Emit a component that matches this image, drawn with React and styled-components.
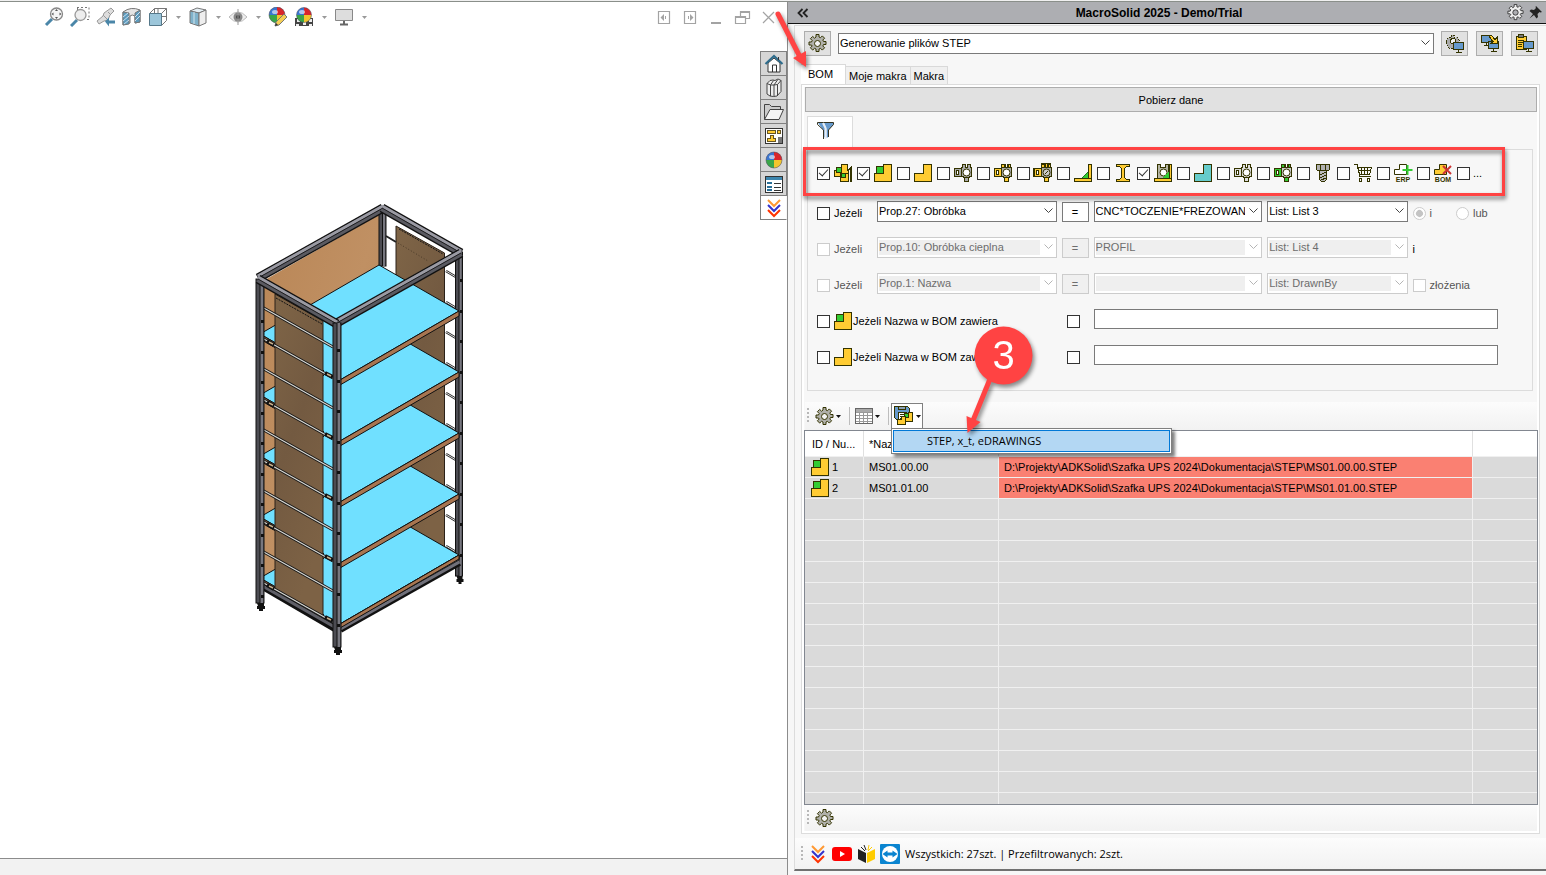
import styled, { createGlobalStyle, css } from "styled-components";

const INK = "#333300";
const YELLOW = "#ffcc33";
const GREEN = "#33cc33";
const BLUE = "#6699cc";
const RED = "#ff4343";

export default function App() {
  return (
    <>
      <GlobalStyle />
      <Layout>
        <ModelPane />
        <MacroPanel />
      </Layout>
    </>
  );
}

/* ---------- left: model view ---------- */

const viewTools = [
  { name: "Zoom to fit", icon: <ZoomFit /> },
  { name: "Zoom to area", icon: <ZoomArea /> },
  { name: "Previous view", icon: <PreviousView /> },
  { name: "Section view", icon: <SectionView /> },
  { name: "View orientation", icon: <Orientation />, menu: true },
  { name: "Display style", icon: <DisplayStyle />, menu: true },
  { name: "Hide/show items", icon: <Eye />, menu: true },
  { name: "Edit appearance", icon: <Appearance /> },
  { name: "Apply scene", icon: <Scene />, menu: true },
  { name: "View settings", icon: <Monitor />, menu: true },
];

const windowTools = [
  { name: "Previous pane", d: "M4.5 4.5h11v12h-11z", arrow: "M10 7v7l-3.500-3.500zM11 9h1v3h-1z" },
  { name: "Next pane", d: "M4.5 4.5h11v12h-11z", arrow: "M10 7v7l3.500-3.500zM8 9h1v3h-1z" },
  { name: "Minimize", d: "M5 15.5h10M5 16.5h10" },
  { name: "Restore", d: "M8.5 9v-4.5h9v7h-4M8 5.5h10M3.500 9.500h10v7h-10zM3 10.500h11" },
  { name: "Close", d: "M5 5l11 11M16 5l-11 11" },
];

const taskTabs = [
  { name: "Home", icon: <House /> },
  { name: "Design library", icon: <Books /> },
  { name: "File explorer", icon: <Folder /> },
  { name: "View palette", icon: <Palette /> },
  { name: "Appearances", icon: <Ball /> },
  { name: "Custom properties", icon: <PropertyList /> },
  { name: "MacroSolid", icon: <Chevrons />, active: true },
];

function ModelPane() {
  return (
    <Viewport>
      <ViewHeader>
        <ToolGroup>
          {viewTools.map((t) => (
            <ToolGroup key={t.name}>
              <FlatButton aria-label={t.name}>{t.icon}</FlatButton>
              {t.menu && (
                <MenuArrow aria-label={`${t.name} menu`}>
                  <svg width="5" height="3"><path d="M0 0h5l-2.500 3z" fill="#999" /></svg>
                </MenuArrow>
              )}
            </ToolGroup>
          ))}
        </ToolGroup>
        <ToolGroup>
          {windowTools.map((t) => (
            <FlatButton key={t.name} aria-label={t.name}>
              <svg width="21" height="21" viewBox="0 0 21 21">
                <path d={t.d} fill="none" stroke="#a3a3a3" strokeWidth="1.2" />
                {t.arrow && <path d={t.arrow} fill="#a3a3a3" />}
              </svg>
            </FlatButton>
          ))}
        </ToolGroup>
      </ViewHeader>
      <ViewBody>
        <Canvas>
          <Shelving />
        </Canvas>
        <TaskTabs>
          {taskTabs.map((t) => (
            <TaskTab key={t.name} aria-label={t.name} $active={t.active}>
              {t.icon}
            </TaskTab>
          ))}
        </TaskTabs>
      </ViewBody>
      <ViewFooter />
    </Viewport>
  );
}

const shelfTops = [311, 372, 433, 494, 555];
const rungs = [0, 1, 2, 3, 4, 5, 6, 7, 8, 9].map((n) => Math.round(n * 30.5));

function Beam({ x1, y1, x2, y2 }) {
  const p = { x1, y1, x2, y2 };
  return (
    <g>
      <line {...p} stroke="#111" strokeWidth="9" />
      <line {...p} stroke="#5a5a61" strokeWidth="6.500" />
      <line x1={x1} y1={y1 - 2} x2={x2} y2={y2 - 2} stroke="#9a9aa3" strokeWidth="3" />
      <line {...p} stroke="#1c1c1e" strokeWidth="1" />
    </g>
  );
}

function Post({ x, top, bottom, width, foot = true }) {
  return (
    <g>
      <rect x={x} y={top} width={width} height={bottom - top} fill="#4c4c52" stroke="#111" />
      <rect x={x + width / 2} y={top} width={width / 2 - 1} height={bottom - top} fill="#77777f" />
      <line x1={x + width / 2} x2={x + width / 2} y1={top} y2={bottom} stroke="#111" />
      {foot && <path d={`M${x + 1} ${bottom}h${width - 1}v3h1v3h-2v2h-${width - 4}v-2h-2v-3h1z`} fill="#111" />}
    </g>
  );
}

function Shelving() {
  return (
    <svg width="210" height="452" viewBox="256 204 210 452" role="img" aria-label="Shelving unit">
      <defs>
        <linearGradient id="lightWood" x1="0" y1="0" x2="1" y2="1">
          <stop offset="0" stopColor="#b98656" />
          <stop offset="0.5" stopColor="#c09063" />
          <stop offset="1" stopColor="#b48253" />
        </linearGradient>
        <linearGradient id="darkWood" x1="0" y1="0" x2="0.4" y2="1">
          <stop offset="0" stopColor="#7f6547" />
          <stop offset="0.5" stopColor="#735a41" />
          <stop offset="1" stopColor="#7d6245" />
        </linearGradient>
      </defs>
      <path d="M264 281L381 214V500L264 588z" fill="url(#lightWood)" />
      <path d="M387 217L458 256V556L446 552V254L397 226V275L387 268z" fill="#fff" />
      <path d="M397 226L445.500 253V560L397 530z" fill="url(#darkWood)" stroke="#2b2118" />
      <path d="M400 229l44 25" stroke="#111" strokeDasharray="2 1" />
      <path d="M387 236l10 6" stroke="#222" strokeWidth="2" />
      <path d="M399 243l30 18" stroke="#4a3a28" strokeDasharray="1 2" />
      {rungs.map((y) => (
        <g key={y}>
          <path d={`M447 ${271 + y}l10 6`} stroke="#222" strokeWidth="2.500" />
          <path d={`M447 ${271 + y}l10 6`} stroke="#ddd" strokeWidth="1" />
        </g>
      ))}
      <Post x={380} top={210} bottom={266} width={7} foot={false} />
      <Post x={456.5} top={252} bottom={576} width={7} />
      {[...shelfTops].reverse().map((y) => (
        <g key={y}>
          <path d={`M380 ${y - 46}L460 ${y}L341 ${y + 69}L261 ${y + 23}z`} fill="#70e0ff" stroke="#111" />
          <path d={`M460 ${y}v5L341 ${y + 74}v-5z`} fill="#a87550" stroke="#111" />
          <path d={`M261 ${y + 23}v5L341 ${y + 74}v-5z`} fill="#a87550" stroke="#111" />
        </g>
      ))}
      <path d="M325 320h9v301l-9 -5z" fill="#70e0ff" />
      <path d="M276 294L324 321V616L276 589z" fill="url(#darkWood)" stroke="#2b2118" />
      <path d="M277 298l46 26" stroke="#111" strokeDasharray="2 1" />
      <path d="M264 586L336 628" stroke="#111" strokeWidth="8" />
      <path d="M264 585L336 626" stroke="#5f5f67" strokeWidth="5" />
      <path d="M264 584L336 625" stroke="#1a1a1a" />
      <path d="M341 629L460 562" stroke="#111" strokeWidth="8" />
      <path d="M341 628L460 561" stroke="#70707a" strokeWidth="5" />
      <path d="M341 627L460 560" stroke="#222" />
      <path d="M341 624L460 555v4L341 628z" fill="#a87550" stroke="#111" />
      {rungs.map((y) => (
        <g key={y}>
          <path d={`M263 ${307 + y}l71 40`} stroke="#161616" strokeWidth="3" />
          <path d={`M263 ${307 + y}l71 40`} stroke="#d9d9d4" strokeWidth="1.200" />
        </g>
      ))}
      {shelfTops.map((y) => (
        <g key={y} stroke="#111" strokeWidth="4">
          <path d={`M268 ${y + 30}l7 4M326 ${y + 62}l8 4`} />
          <path d={`M270 ${y + 31}l4 2M328 ${y + 63}l4 2`} stroke="#c9b08c" strokeWidth="1.500" />
        </g>
      ))}
      <Post x={257} top={279} bottom={603} width={8} />
      <Beam x1={259} y1={278} x2={384} y2={208} />
      <Beam x1={383} y1={208} x2={462} y2={253} />
      <Beam x1={336} y1={324} x2={462} y2={253} />
      <Beam x1={259} y1={279} x2={338} y2={324} />
      <Post x={334} top={323} bottom={647} width={8} />
      <g fill="#111">
        {rungs.map((y) => (
          <g key={y}>
            <rect x="338" y={349 + y} width="3" height="3" />
            <rect x="461" y={279 + y} width="3" height="3" />
            <rect x="262" y={320 + y} width="3" height="3" />
          </g>
        ))}
      </g>
    </svg>
  );
}

/* ---------- right: macro panel ---------- */

const filters = [
  { name: "Assemblies", icon: <Assembly />, on: true },
  { name: "Sub-assemblies", icon: <Part sub />, on: true },
  { name: "Parts", icon: <Part /> },
  { name: "Toolbox", icon: <Fitting body="#aaa" /> },
  { name: "Toolbox parts", icon: <Fitting body="#aaa" side={YELLOW} /> },
  { name: "Toolbox assemblies", icon: <Fitting body="#aaa" side={YELLOW} double /> },
  { name: "Weldments", icon: <Weldment /> },
  { name: "Profiles", icon: <Profile /> },
  { name: "Machined", icon: <Machined />, on: true },
  { name: "Sheet metal", icon: <Part color="#66cccc" /> },
  { name: "Purchased", icon: <Fitting body="#ddd" /> },
  { name: "Purchased parts", icon: <Fitting body="#ccc" side={GREEN} /> },
  { name: "Fasteners", icon: <Bolt /> },
  { name: "Shopping", icon: <Cart /> },
  { name: "ERP", icon: <ListMark text="ERP" /> },
  { name: "BOM", icon: <ListMark text="BOM" /> },
];

const conditions = [
  { prop: "Prop.27: Obróbka", value: "CNC*TOCZENIE*FREZOWAN", list: "List: List 3" },
  { prop: "Prop.10: Obróbka cieplna", value: "PROFIL", list: "List: List 4", disabled: true },
  { prop: "Prop.1: Nazwa", value: "", list: "List: DrawnBy", disabled: true },
];

const documents = [
  { id: 1, name: "MS01.00.00", path: "D:\\Projekty\\ADKSolid\\Szafka UPS 2024\\Dokumentacja\\STEP\\MS01.00.00.STEP" },
  { id: 2, name: "MS01.01.00", path: "D:\\Projekty\\ADKSolid\\Szafka UPS 2024\\Dokumentacja\\STEP\\MS01.01.00.STEP" },
];

const emptyRows = Array.from({ length: 15 }, (_, i) => i);

function MacroPanel() {
  return (
    <Panel>
      <TitleBar>
        <TitleButton aria-label="Collapse">
          <svg width="12" height="10" viewBox="0 0 12 10">
            <path d="M5.500 1L1.500 5l4 4M10.500 1L6.500 5l4 4" fill="none" stroke="#222" strokeWidth="1.800" />
          </svg>
        </TitleButton>
        <h1>MacroSolid 2025 - Demo/Trial</h1>
        <TitleButton aria-label="Settings"><Gear fill="#eee" hub="#adaeb2" stroke="#333" size={17} /></TitleButton>
        <TitleButton aria-label="Pin">
          <svg width="13" height="13" viewBox="0 0 13 13">
            <path d="M7 0l6 6-1.500 .500-1-.500-2 2 .500 3-1.500 1.500L5 9 .500 12.500 4 8 .500 5 2 3.500l3 .500 2-2-.500-1z" fill="#222" />
          </svg>
        </TitleButton>
      </TitleBar>

      <PanelBody>
        <MacroRow>
          <ToolButton aria-label="Macro settings"><Gear /></ToolButton>
          <Combo label="Macro" value="Generowanie plików STEP" />
          <MacroActions>
            <ToolButton aria-label="Run on document"><RunIcon /></ToolButton>
            <ToolButton aria-label="Run on all"><SwapIcon /></ToolButton>
            <ToolButton aria-label="Run on list"><ClipboardIcon /></ToolButton>
          </MacroActions>
        </MacroRow>

        <Tabs role="tablist">
          <Tab role="tab" aria-selected="true" $active>BOM</Tab>
          <Tab role="tab">Moje makra</Tab>
          <Tab role="tab">Makra</Tab>
        </Tabs>

        <TabPage>
          <FetchButton>Pobierz dane</FetchButton>
          <FilterTab aria-label="Filter">
            <svg width="18" height="20" viewBox="0 0 18 20">
              <path d="M1 1.500h5l3 5v11L6 15V9L2.500 4z" fill={BLUE} />
              <path d="M7 1.500h9.500v2L11.500 9v7l-2 1V8z" fill={BLUE} />
              <path d="M.500 1.500h16v2l-5 5.500v7M.500 1.500v2L6.500 9v9" fill="none" stroke="#333322" />
              <path d="M6 2l2.500 5v11" fill="none" stroke="#e8eef5" strokeWidth="2" />
            </svg>
          </FilterTab>
          <FilterBox>
            <FilterRow>
              {filters.map((f) => (
                <FilterItem key={f.name}>
                  <Check aria-label={f.name} defaultChecked={f.on} />
                  {f.icon}
                </FilterItem>
              ))}
              <FilterItem>
                <Check />
                <span>...</span>
              </FilterItem>
              <Highlight />
            </FilterRow>
            <Conditions>
              {conditions.map((c, i) => (
                <Condition key={c.prop} {...c} index={i} />
              ))}
              <NameCondition icon={<Part sub />} />
              <NameCondition icon={<Part />} />
            </Conditions>
          </FilterBox>

          <Toolbar>
            <Grip />
            <StripButton aria-label="Options"><Gear /><Caret /></StripButton>
            <Divider />
            <StripButton aria-label="Columns"><TableIcon /><Caret /></StripButton>
            <Divider />
            <MenuAnchor>
              <StripButton aria-label="Export" $open><SaveParts /><Caret /></StripButton>
              <Menu role="menu">
                <MenuItem role="menuitem">STEP, x_t, eDRAWINGS</MenuItem>
              </Menu>
              <StepMark viewBox="966 325 72 115" width="72" height="115">
                <path d="M990 380L972 424" stroke={RED} strokeWidth="5" />
                <path d="M967.500 434L966.500 417L980.500 423z" fill={RED} />
                <circle cx="1003.500" cy="356.500" r="29" fill={RED} />
                <text x="1003.500" y="370" textAnchor="middle">3</text>
              </StepMark>
            </MenuAnchor>
          </Toolbar>

          <ListView>
            <Table>
              <colgroup>
                <col width="59" />
                <col width="135" />
                <col width="474" />
                <col />
              </colgroup>
              <thead>
                <tr>
                  <th>ID / Nu...</th>
                  <th>*Nazwa</th>
                  <th aria-label="Path" />
                  <th aria-label="Status" />
                </tr>
              </thead>
              <tbody>
                {documents.map((d) => (
                  <tr key={d.id}>
                    <td><IdCell><Part sub />{d.id}</IdCell></td>
                    <td>{d.name}</td>
                    <PathCell>{d.path}</PathCell>
                    <td />
                  </tr>
                ))}
                {emptyRows.map((n) => (
                  <tr key={n}><td /><td /><td /><td /></tr>
                ))}
              </tbody>
            </Table>
          </ListView>

          <ListFooter>
            <Grip />
            <StripButton aria-label="List options"><Gear /></StripButton>
          </ListFooter>
        </TabPage>

        <StatusBar>
          <Grip />
          <StatusLink href="#macrosolid" aria-label="MacroSolid"><Chevrons /></StatusLink>
          <StatusLink href="#youtube" aria-label="YouTube">
            <svg width="20" height="14" viewBox="0 0 20 14">
              <rect width="20" height="14" rx="3" fill="#f00" />
              <path d="M8 4l5 3-5 3z" fill="#fff" />
            </svg>
          </StatusLink>
          <StatusLink href="#manual" aria-label="Manual">
            <svg width="17" height="19" viewBox="0 0 17 19">
              <path d="M0 5l8 4v10l-8-4z" fill="#222" />
              <path d="M17 5l-8 4v10l8-4z" fill="#fc0" />
              <path d="M3 3l4 4M6 1l2 5" stroke="#222" />
              <path d="M11 1l-1 5M14 3l-4 4" stroke="#fc0" />
            </svg>
          </StatusLink>
          <StatusLink href="#support" aria-label="Remote support">
            <svg width="20" height="20" viewBox="0 0 20 20">
              <rect width="20" height="20" rx="1" fill="#0a84d0" />
              <circle cx="10" cy="10" r="8" fill="#fff" />
              <path d="M2.500 10l5-3.500v2h5v-2l5 3.500-5 3.500v-2h-5v2z" fill="#0a84d0" />
            </svg>
          </StatusLink>
          <StatusText>Wszystkich: 27szt. | Przefiltrowanych: 2szt.</StatusText>
        </StatusBar>
      </PanelBody>

      <TabMark viewBox="772 8 40 64" width="40" height="64">
        <path d="M778 14L800 57" stroke={RED} strokeWidth="5" strokeLinecap="round" />
        <path d="M806 67L793 58L806 51z" fill={RED} />
      </TabMark>
    </Panel>
  );
}

function Combo({ label, value, disabled }) {
  return (
    <ComboBox $disabled={disabled}>
      <select aria-label={label} disabled={disabled} defaultValue={value}>
        <option>{value}</option>
      </select>
      <svg width="9" height="6" viewBox="0 0 9 6">
        <path d="M.500 .500l4 4 4-4" fill="none" stroke={disabled ? "#b5b5b5" : "#444"} />
      </svg>
    </ComboBox>
  );
}

function Condition({ prop, value, list, disabled, index }) {
  return (
    <>
      <CheckLabel $disabled={disabled}>
        <Check disabled={disabled} />
        Jeżeli
      </CheckLabel>
      <Combo label="Property" value={prop} disabled={disabled} />
      <EqualsButton disabled={disabled}>=</EqualsButton>
      <Combo label="Value" value={value} disabled={disabled} />
      <Combo label="List" value={list} disabled={disabled} />
      {index === 0 && (
        <Operators>
          <CheckLabel $disabled><Radio name="operator" defaultChecked disabled />i</CheckLabel>
          <CheckLabel $disabled><Radio name="operator" disabled />lub</CheckLabel>
        </Operators>
      )}
      {index === 1 && <Operators><CheckLabel as="span">i</CheckLabel></Operators>}
      {index === 2 && (
        <Operators>
          <CheckLabel $disabled><Check disabled />złożenia</CheckLabel>
        </Operators>
      )}
    </>
  );
}

function NameCondition({ icon }) {
  return (
    <>
      <NameLabel>
        <Check />
        <span>{icon}Jeżeli Nazwa w BOM zawiera</span>
      </NameLabel>
      <Centered><Check aria-label="Negate" /></Centered>
      <TextInput aria-label="Nazwa w BOM" />
    </>
  );
}

/* ---------- icons ---------- */

function Caret() {
  return <svg width="5" height="3"><path d="M0 0h5l-2.500 3z" fill="#111" /></svg>;
}

function Gear({ fill = "#b0b0aa", hub = "#f4f4f4", stroke = INK, size = 19 }) {
  return (
    <svg width={size} height={size} viewBox="0 0 19 19">
      <path
        d="M8 .500h3v2.500l1.500.700 1.800-1.800 2.300 2.300-1.800 1.800.700 1.500h2.500v3h-2.500l-.700 1.500 1.800 1.800-2.300 2.300-1.800-1.800-1.500.700v2.500H8v-2.500l-1.500-.700-1.800 1.800-2.300-2.300 1.800-1.800L3.500 11H1V8h2.500l.700-1.500-1.800-1.800 2.300-2.300 1.800 1.800L8 3z"
        fill={fill}
        stroke={stroke}
      />
      <circle cx="9.500" cy="9.500" r="3" fill={hub} stroke={stroke} />
    </svg>
  );
}

function Pic({ children }) {
  return (
    <svg width="20" height="20" viewBox="0 0 20 20" shapeRendering="crispEdges" stroke={INK} fill="none">
      {children}
    </svg>
  );
}

function Part({ sub, color = YELLOW }) {
  return (
    <Pic>
      <path d="M1.500 10.500h9v-9h8v17h-17z" fill={color} />
      {sub && <path d="M3.500 3.500h7v7h-7z" fill={GREEN} />}
    </Pic>
  );
}

function Assembly() {
  return (
    <Pic>
      <path d="M8.500 1.500h6v6h1v11h-8v-5h-6v-6h7z" fill={YELLOW} />
      <path d="M7.500 13.500v-3h8" />
      <path d="M3.500 4.500h5v5h-5zM8.500 10.500h4v4h-4z" fill={GREEN} />
      <path d="M14 7l5-5v17h-2V7z" fill={INK} stroke="none" />
    </Pic>
  );
}

function Fitting({ body, side, double }) {
  return (
    <Pic>
      {double && <path d="M8.500 3.500v-3h9v3M.500 5.500h5v8h-5z" fill={side} />}
      <path d="M1.500 5.500h7v8h-7z" fill={side || body} />
      <path d="M8.500 4.500h1v-3h3v3h2v-3h3v3h1v9h-2v1h-6v-1h-2z" fill={body} />
      {side && <path d="M8.500 1.500h3v3h-3zM15.500 1.500h2v3h-2z" fill={side} />}
      <path d="M11.500 14.500h4v4h-4z" fill={side || body} />
      <path d="M3.500 7.500h2v4h-2z" fill="#fff" />
      <circle cx="13.500" cy="9.500" r="3.500" fill={double ? "#ccc" : "#fff"} shapeRendering="auto" />
      {double && <path d="M12 11l3-3" />}
    </Pic>
  );
}

function Weldment() {
  return (
    <Pic>
      <path d="M9 15l6-6v6z" fill={GREEN} stroke="#227722" />
      <path d="M15.500 1.500h3v14h-3zM1.500 15.500h17v3h-17z" fill={YELLOW} />
    </Pic>
  );
}

function Profile() {
  return (
    <Pic>
      <path d="M3.500 1.500h13v2h-3l-2 2v9l2 2h3v2h-13v-2h3l2-2v-9l-2-2h-3z" fill={YELLOW} />
    </Pic>
  );
}

function Machined() {
  return (
    <Pic>
      <path d="M4.500 5.500v-4h3v3h5v-3h3v14h-11z" fill="#b5b5a5" />
      <circle cx="10.500" cy="9.500" r="3.500" fill="#fff" shapeRendering="auto" />
      <path d="M9 15l7-6v6z" fill={GREEN} stroke="none" />
      <path d="M1.500 15.500h17v3h-17zM16.500 1.500h2v14h-2z" fill={YELLOW} />
    </Pic>
  );
}

function Bolt() {
  return (
    <Pic>
      <path d="M3.500 1.500h13v5l-1 1h-11l-1-1z" fill="#b0b0b0" />
      <path d="M6.500 7.500h7v9l-2 2h-3l-2-2z" fill="#bbb" />
      <path d="M7.500 2v5M12.500 2v5M7 12l6-3M7 15l6-3M8 17l5-2" />
    </Pic>
  );
}

function Cart() {
  return (
    <Pic>
      <path d="M1 1.500h3l3 12h11M4.500 4.500h14l-2 7h-10M5 7.500h13M8.500 4v7M11.500 4v7M14.500 4v7" />
      <circle cx="7.500" cy="17" r="1.500" />
      <circle cx="15.500" cy="17" r="1.500" />
    </Pic>
  );
}

function ListMark({ text }) {
  const erp = text === "ERP";
  return (
    <svg width="20" height="20" viewBox="0 0 20 20">
      <path d="M1.500 6.500h5v-5h7v10h-12z" fill={erp ? "#fff" : YELLOW} stroke={INK} />
      {erp ? (
        <path d="M14.500 2v10M9.500 7h10" stroke={GREEN} strokeWidth="2" />
      ) : (
        <path d="M10 3l8 8M18 3l-8 8" stroke="#c33" strokeWidth="2" />
      )}
      <IconText x="10" y="19" textAnchor="middle">{text}</IconText>
    </svg>
  );
}

function Screen({ x, y }) {
  return (
    <g stroke={INK}>
      <rect x={x + 0.5} y={y + 0.5} width="10" height="7" fill={BLUE} />
      <path d={`M${x + 5.5} ${y + 8}v2M${x + 3} ${y + 10.5}h6`} />
    </g>
  );
}

function RunIcon() {
  return (
    <Pic>
      <path d="M2 5l2-2 2 1 1-3h2l1 3 2-1 2 3v3H8v5H4l-1-2-2-2 1-2-1-1z" fill="#aaa" strokeDasharray="2 1" />
      <circle cx="8" cy="7" r="2.500" fill="#eee" />
      <Screen x={8} y={8} />
    </Pic>
  );
}

function SwapIcon() {
  return (
    <Pic>
      <Screen x={1} y={1} />
      <Screen x={8} y={7} />
      <path d="M8.500 1.500l3 0 3.500 4 2-2v6h-6l2-2z" fill={YELLOW} />
    </Pic>
  );
}

function ClipboardIcon() {
  return (
    <Pic>
      <path d="M1.500 2.500h10v13h-10z" fill={YELLOW} />
      <path d="M3.500 .500h5v3h-5z" fill="#777" />
      <path d="M3 6.500h6M3 8.500h6M3 10.500h4M3 12.500h4" />
      <Screen x={8} y={7} />
    </Pic>
  );
}

function TableIcon() {
  return (
    <svg width="18" height="16" viewBox="0 0 18 16" shapeRendering="crispEdges">
      <path d="M.500 .500h17v15h-17z" fill="#fff" stroke="#666" />
      <path d="M1 1h16v3H1z" fill="#aaa" />
      <path d="M1 4.500h16M1 7.500h16M1 10.500h16M1 13.500h16M4.500 4v11M8.500 4v11M12.500 4v11" stroke="#999" />
    </svg>
  );
}

function SaveParts() {
  return (
    <Pic>
      <path d="M.500 .500h13l2 2v11h-13l-2-2z" fill={BLUE} />
      <path d="M4.500 .500h7v3h-7z" fill="#8aa0b5" />
      <path d="M4.500 6.500h8v8h-8z" fill="#fff" />
      <path d="M6 8.500h4M6 10.500h3M6 12.500h3" />
      <path d="M14.500 6.500h4v9h-7v-4h3z" fill={YELLOW} />
      <path d="M10.500 7.500h4v4h-4z" fill={GREEN} />
      <path d="M3.500 13.500h4v-3h4v8h-8z" fill={YELLOW} />
    </Pic>
  );
}

function Chevrons() {
  return (
    <svg width="16" height="20" viewBox="0 0 16 20" fill="none" strokeWidth="2">
      <path d="M2 2l6 6 6-6" stroke="#ff9933" />
      <path d="M2 7l6 6 6-6" stroke="#3333cc" />
      <path d="M2 12l6 6 6-6" stroke="#ff3300" />
    </svg>
  );
}

function House() {
  return (
    <svg width="20" height="20" viewBox="0 0 20 20">
      <path d="M4 9v9h12V9l-6-5z" fill="#fff" stroke="#333" />
      <path d="M1.500 10L10 2l8.500 8" fill="none" stroke="#2e6c8c" strokeWidth="2.200" />
      <path d="M8.500 18v-7h4v7M14.500 3v3" fill="none" stroke="#333" />
    </svg>
  );
}

function Books() {
  return (
    <svg width="20" height="20" viewBox="0 0 20 20" stroke="#444" fill="#eee">
      <path d="M3 5.500l3-3 3-.500 2 .500 3-1.500 3 1.500v11l-4 4.500-3.500.500-3.500-.500-3-2z" />
      <path d="M6.500 7v11M10 7v11.500M13.500 6.500v11.500M3 5.500l3.500 1.500 3-4.500M6.500 7h3.500l3.500-5M10 7l3.500-.500 3.500-4" fill="none" />
    </svg>
  );
}

function Folder() {
  return (
    <svg width="20" height="20" viewBox="0 0 20 20" stroke="#444">
      <path d="M.500 17.500v-15h5l2 2h9v3" fill="#ccc" />
      <path d="M.500 17.500L6 7.500h13.500L15 17.500z" fill="#f4f4f4" />
    </svg>
  );
}

function Palette() {
  return (
    <Pic>
      <path d="M1.500 2.500h17v15h-17z" fill="#fff" stroke="#333" />
      <path d="M3.500 4.500h8v3h-8zM13.500 4.500h3v3h-3zM6.500 9.500h3v3h2v3h-8v-3h3z" fill={YELLOW} stroke="#665522" />
      <path d="M14 11h4v6h-4z" fill="#777" stroke="none" />
    </Pic>
  );
}

function Ball({ r = 8, cx = 10, cy = 10 }) {
  return (
    <svg width="20" height="20" viewBox="0 0 20 20">
      <BallShape r={r} cx={cx} cy={cy} />
    </svg>
  );
}

function BallShape({ r, cx, cy }) {
  return (
    <g>
      <path d={`M${cx} ${cy}V${cy - r}A${r} ${r} 0 0 1 ${cx + r} ${cy}z`} fill="#d9262b" />
      <path d={`M${cx} ${cy}H${cx + r}A${r} ${r} 0 0 1 ${cx} ${cy + r}z`} fill="#f2c52c" />
      <path d={`M${cx} ${cy}V${cy + r}A${r} ${r} 0 0 1 ${cx - r} ${cy}z`} fill="#3aa648" />
      <path d={`M${cx} ${cy}H${cx - r}A${r} ${r} 0 0 1 ${cx} ${cy - r}z`} fill="#3b76d0" />
      <circle cx={cx} cy={cy} r={r} fill="none" stroke="#445" strokeOpacity="0.5" />
      <ellipse cx={cx - 2} cy={cy - 3} rx="3" ry="2" fill="#fff" opacity="0.6" />
    </g>
  );
}

function PropertyList() {
  return (
    <Pic>
      <path d="M1.500 2.500h17v16h-17z" fill="#fff" stroke="#333" />
      <path d="M2 3h16v3H2z" fill="#3d86ae" stroke="none" />
      <path d="M3 8h5v2H3zM3 12h5v2H3zM3 15h5v2H3z" fill="#2a6f97" stroke="none" />
      <path d="M10 9.500h7M10 13.500h7M10 16.500h7" stroke="#333" />
    </Pic>
  );
}

function ZoomFit() {
  return (
    <svg width="20" height="20" viewBox="0 0 20 20" fill="none">
      <path d="M2 18l6-6" stroke="#4a86a8" strokeWidth="3" />
      <circle cx="12.500" cy="7" r="6" fill="#f4f4f4" stroke="#888" strokeWidth="1.300" />
      <path d="M12.500 2l1.500 2h-3zM12.500 12l1.500-2h-3zM7.500 7l2-1.500v3zM17.500 7l-2-1.500v3z" fill="#555" />
    </svg>
  );
}

function ZoomArea() {
  return (
    <svg width="20" height="20" viewBox="0 0 20 20" fill="none">
      <path d="M7 .500h12v12h-3M7.500 1v3" stroke="#777" strokeDasharray="2 2" />
      <path d="M1 19l6-6" stroke="#4a86a8" strokeWidth="3" />
      <circle cx="10.500" cy="8" r="5.500" fill="#eee" stroke="#999" strokeWidth="1.300" />
    </svg>
  );
}

function PreviousView() {
  return (
    <svg width="20" height="20" viewBox="0 0 20 20">
      <path d="M15 1l3 3-4 4-2 5-4 1-5 3-2-3 6-5 1-3z" fill="#ddd" stroke="#999" />
      <path d="M7 8l5 5M12 5l3 3" stroke="#999" />
      <path d="M9 14.500l4-4v3h6v3h-6v3z" fill="#4a86a8" />
    </svg>
  );
}

function SectionView() {
  return (
    <svg width="20" height="20" viewBox="0 0 20 20" stroke="#777">
      <path d="M1 5q8-6 17-2v12l-5 1V9q-3-2-5 0v7l-7 2z" fill="#e4e4e4" />
      <path d="M1 5l6 1v11l-6 1zM13 6l5-3v12l-5 1z" fill="#5b9bbd" />
      <path d="M1 10l5-4M1 14l6-5M2 17l5-4M13 10l5-5M13 14l5-5" stroke="#cde" />
    </svg>
  );
}

function Orientation() {
  return (
    <svg width="20" height="20" viewBox="0 0 20 20" stroke="#777" fill="none">
      <path d="M1.500 6.500l5-5h12v12l-5 5M6.500 1.500v5M13.500 6.500l5-5M10 1.500v5M14 9.500h5" />
      <path d="M1.500 6.500h12v12h-12z" fill="#9cc6da" stroke="#55788a" />
    </svg>
  );
}

function DisplayStyle() {
  return (
    <svg width="20" height="20" viewBox="0 0 20 20" stroke="#777">
      <path d="M2 4l7-3 9 2-7 3z" fill="#e6f0f5" />
      <path d="M2 4l9 2v13l-9-3z" fill="#7fb2cb" />
      <path d="M11 6l7-3v13l-7 3z" fill="#eee" />
      <path d="M6 5v12" stroke="#d5e6ee" />
    </svg>
  );
}

function Eye() {
  return (
    <svg width="20" height="20" viewBox="0 0 20 20">
      <path d="M1 10q9-10 18 0-9 10-18 0z" fill="#eee" stroke="#bbb" />
      <circle cx="10" cy="10" r="4.500" fill="#888" />
      <circle cx="10" cy="10" r="2" fill="#444" />
      <path d="M10 2v16" stroke="#999" />
    </svg>
  );
}

function Appearance() {
  return (
    <svg width="20" height="20" viewBox="0 0 20 20">
      <BallShape r={8} cx={9} cy={8} />
      <path d="M7 19l1-4 8-8 3 3-8 8z" fill="#f5ce55" stroke="#777" />
      <path d="M7 19l1-3 2 2z" fill="#333" />
    </svg>
  );
}

function Scene() {
  return (
    <svg width="20" height="20" viewBox="0 0 20 20">
      <path d="M1 11h18v8H1z" fill="#444" />
      <path d="M3 12h3v3H3zM9 15h3v3H9zM15 12h3v3h-3zM2 17h3v2H2zM15 17h3v2h-3z" fill="#eee" />
      <BallShape r={7.5} cx={10} cy={8} />
    </svg>
  );
}

function Monitor() {
  return (
    <svg width="20" height="20" viewBox="0 0 20 20">
      <path d="M1.500 2.500h17v11h-17z" fill="#ddd" stroke="#888" />
      <path d="M10 14v3M6 17.500h8" stroke="#666" strokeWidth="2" />
    </svg>
  );
}

/* ---------- styles ---------- */

const GlobalStyle = createGlobalStyle`
  * {
    box-sizing: border-box;
  }
  body {
    margin: 0;
    background: #f0f0f0;
    font-family: "Liberation Sans", Arial, sans-serif;
    font-size: 11px;
    line-height: 14px;
    color: #000;
  }
  button, input, select {
    margin: 0;
    padding: 0;
    font: inherit;
    color: inherit;
  }
  svg {
    display: block;
    flex: none;
  }
`;

const Layout = styled.div`
  display: grid;
  grid-template-columns: minmax(0, 788fr) minmax(0, 758fr);
  height: 100vh;
  padding-top: 1px;
`;

const Viewport = styled.section`
  display: flex;
  flex-direction: column;
  min-height: 0;
  background: #fff;
  border-top: 1px solid #8a8f8a;
  border-right: 1px solid #8c8c8c;
`;

const ViewHeader = styled.header`
  display: flex;
  justify-content: space-between;
  padding: 2px 6px 4px 41px;
`;

const ToolGroup = styled.div`
  display: flex;
`;

const FlatButton = styled.button`
  display: flex;
  align-items: center;
  justify-content: center;
  width: 26px;
  height: 26px;
  border: 0;
  background: none;
`;

const MenuArrow = styled(FlatButton)`
  width: 14px;
`;

const ViewBody = styled.div`
  display: flex;
  flex: 1;
  min-height: 0;
`;

const Canvas = styled.div`
  display: flex;
  flex: 1;
  align-items: center;
  justify-content: center;
  padding: 0 40px 32px 0;
`;

const TaskTabs = styled.nav`
  margin-top: 17px;
  border-top: 1px solid #808080;
  align-self: flex-start;
`;

const TaskTab = styled.button`
  display: flex;
  align-items: center;
  justify-content: center;
  width: 27px;
  height: 24px;
  border: 1px solid #808080;
  border-top: 0;
  background: ${(p) => (p.$active ? "#fff" : "#d6d6d6")};
  border-right-color: ${(p) => (p.$active ? "#f7f7f7" : "#808080")};
`;

const ViewFooter = styled.footer`
  height: 17px;
  background: #f2f2f2;
  border-top: 1px solid #8c8c8c;
`;

const Panel = styled.aside`
  position: relative;
  display: flex;
  flex-direction: column;
  min-height: 0;
  background: #f7f7f7;
  border-top: 1px solid #8a8f8a;
`;

const TitleBar = styled.header`
  display: flex;
  align-items: center;
  height: 22px;
  padding: 0 1px 0 5px;
  background: #adaeb2;
  border-bottom: 1px solid #111;
  h1 {
    flex: 1;
    margin: 0;
    font-size: 12px;
    font-weight: 700;
    text-align: center;
  }
`;

const TitleButton = styled.button`
  display: flex;
  align-items: center;
  justify-content: center;
  width: 20px;
  height: 20px;
  border: 0;
  background: none;
`;

const PanelBody = styled.div`
  display: flex;
  flex-direction: column;
  flex: 1;
  min-height: 0;
  margin: 1px 0 4px 6px;
  border: 1px solid #dcdcdc;
  border-right: 0;
  border-bottom: 2px solid #707070;
`;

const MacroRow = styled.div`
  display: flex;
  align-items: center;
  gap: 7px;
  padding: 5px 8px 0 9px;
  > label {
    flex: 1;
  }
`;

const MacroActions = styled.div`
  display: flex;
  gap: 8px;
`;

const ToolButton = styled.button`
  display: flex;
  align-items: center;
  justify-content: center;
  width: 27px;
  height: 25px;
  border: 1px solid #adadad;
  background: #e1e1e1;
`;

const ComboBox = styled.label`
  display: flex;
  align-items: center;
  min-width: 0;
  height: 21px;
  padding: 1px 3px 2px 1px;
  gap: 4px;
  background: #fff;
  border: 1px solid ${(p) => (p.$disabled ? "#cccccc" : "#7a7a7a")};
  select {
    flex: 1;
    min-width: 0;
    height: 15px;
    border: 0;
    border-radius: 0;
    appearance: none;
    opacity: 1;
    background: ${(p) => (p.$disabled ? "#efefef" : "#fff")};
    color: ${(p) => (p.$disabled ? "#6d6d6d" : "#000")};
  }
`;

const Tabs = styled.div`
  display: flex;
  align-items: flex-end;
  height: 20px;
  margin: 8px 6px 0;
`;

const Tab = styled.button`
  height: 18px;
  padding: 0 3px;
  border: 1px solid #d9d9d9;
  border-left: 0;
  border-bottom: 0;
  background: #f0f0f0;
  ${(p) =>
    p.$active &&
    css`
      height: 21px;
      margin-bottom: -1px;
      padding: 0 12px 2px 7px;
      background: #fff;
    `}
`;

const TabPage = styled.main`
  display: flex;
  flex-direction: column;
  flex: 1;
  min-height: 0;
  margin: 0 6px;
  padding: 2px 2px 2px 3px;
  border: 1px solid #dcdcdc;
  box-shadow: inset 0 0 0 2px #fff;
`;

const FetchButton = styled.button`
  height: 25px;
  border: 1px solid #adadad;
  background: #e1e1e1;
`;

const FilterTab = styled.button`
  width: 46px;
  height: 33px;
  margin: 4px 0 0 2px;
  padding: 0 0 4px 9px;
  border: 1px solid #dcdcdc;
  border-bottom: 0;
  background: #fff;
`;

const FilterBox = styled.section`
  margin: 0 4px 0 2px;
  border: 1px solid #dcdcdc;
`;

const FilterRow = styled.div`
  position: relative;
  display: flex;
  align-items: center;
  height: 46px;
  padding-left: 9px;
`;

const FilterItem = styled.label`
  display: flex;
  align-items: center;
  gap: 3px;
  width: 40px;
`;

const Highlight = styled.div`
  position: absolute;
  inset: -3px 27px 0 -5px;
  border: 3px solid ${RED};
  filter: drop-shadow(1px 3px 2px rgba(0, 0, 0, 0.55));
  pointer-events: none;
`;

const Check = styled.input.attrs({ type: "checkbox" })`
  display: flex;
  align-items: center;
  justify-content: center;
  flex: none;
  width: 13px;
  height: 13px;
  appearance: none;
  background: #fff;
  border: 1px solid ${(p) => (p.disabled ? "#cccccc" : "#333")};
  &:checked::after {
    content: "";
    width: 4px;
    height: 8px;
    margin-bottom: 3px;
    border: solid #333;
    border-width: 0 1px 1px 0;
    transform: rotate(42deg);
  }
`;

const Radio = styled(Check).attrs({ type: "radio" })`
  border-radius: 50%;
  &:checked::after {
    width: 7px;
    height: 7px;
    margin: 0;
    border: 0;
    border-radius: 50%;
    background: #c4c4c4;
  }
`;

const Conditions = styled.div`
  display: grid;
  grid-template-columns: 55px minmax(0, 179fr) 27px minmax(0, 168fr) minmax(0, 140fr) minmax(0, 119fr);
  grid-auto-rows: 21px;
  gap: 15px 5px;
  padding: 5px 0 24px 9px;
`;

const CheckLabel = styled.label`
  display: flex;
  align-items: center;
  gap: 4px;
  padding-top: 3px;
  color: ${(p) => (p.$disabled ? "#555" : "#000")};
`;

const EqualsButton = styled.button`
  height: 20px;
  margin-top: 1px;
  border: 1px solid ${(p) => (p.disabled ? "#cccccc" : "#7a7a7a")};
  background: ${(p) => (p.disabled ? "#f0f0f0" : "#fff")};
  color: ${(p) => (p.disabled ? "#6d6d6d" : "#000")};
`;

const Operators = styled.div`
  display: flex;
  align-items: center;
  gap: 24px;
`;

const NameLabel = styled(CheckLabel)`
  grid-column: 1 / 3;
  gap: 3px;
  span {
    display: flex;
    align-items: center;
  }
`;

const Centered = styled.div`
  display: flex;
  align-items: center;
  padding: 3px 0 0 5px;
`;

const TextInput = styled.input`
  grid-column: 4 / 7;
  height: 20px;
  margin-right: 34px;
  border: 1px solid #7a7a7a;
  background: #fff;
`;

const Toolbar = styled.div`
  display: flex;
  align-items: center;
  height: 28px;
  margin-top: 11px;
  padding-left: 2px;
  background: linear-gradient(#fcfcfc, #f2f2f2);
`;

const Grip = styled.span`
  width: 2px;
  height: 16px;
  margin-right: 3px;
  background: repeating-linear-gradient(#b8b8b8 0 2px, transparent 2px 4px);
`;

const StripButton = styled.button`
  display: flex;
  align-items: center;
  gap: 2px;
  height: 26px;
  padding: 0 1px 0 2px;
  border: 1px solid transparent;
  background: none;
  ${(p) =>
    p.$open &&
    css`
      border-color: #808080;
      border-bottom-color: #fff;
      background: #fff;
    `}
`;

const Divider = styled.span`
  width: 1px;
  height: 18px;
  margin: 0 2px 0 6px;
  background: #bdbdbd;
`;

const MenuAnchor = styled.div`
  position: relative;
`;

const Menu = styled.div`
  position: absolute;
  top: 25px;
  left: 0;
  z-index: 2;
  width: 281px;
  padding: 1px;
  background: #fff;
  border: 1px solid #808080;
  box-shadow: 3px 3px 3px rgba(0, 0, 0, 0.5);
`;

const MenuItem = styled.button`
  display: block;
  width: 100%;
  height: 22px;
  padding-left: 33px;
  border: 1px solid #0078d7;
  background: #b3d7f3;
  font-family: "Open Sans", sans-serif;
  text-align: left;
`;

const StepMark = styled.svg`
  position: absolute;
  left: 75px;
  top: -79px;
  z-index: 3;
  overflow: visible;
  filter: drop-shadow(2px 3px 2px rgba(0, 0, 0, 0.45));
  pointer-events: none;
  text {
    font-size: 40px;
    fill: #fff;
  }
`;

const TabMark = styled.svg`
  position: absolute;
  left: -16px;
  top: 6px;
  overflow: visible;
  filter: drop-shadow(2px 3px 2px rgba(0, 0, 0, 0.45));
  pointer-events: none;
`;

const ListView = styled.div`
  flex: 1;
  min-height: 0;
  margin: 0 -1px;
  overflow: hidden;
  border: 1px solid #828790;
  background: #dadada;
`;

const Table = styled.table`
  width: 100%;
  table-layout: fixed;
  border-collapse: separate;
  border-spacing: 0;
  th,
  td {
    padding: 0 5px;
    border-right: 1px solid #f0f0f0;
    border-bottom: 1px solid #f0f0f0;
    text-align: left;
    font-weight: 400;
    white-space: nowrap;
    overflow: hidden;
  }
  th {
    height: 26px;
    background: #fff;
    border-right-color: #e0e0e0;
  }
  th:first-child {
    padding-left: 7px;
  }
  td {
    height: 21px;
  }
  th:last-child,
  td:last-child {
    border-right: 0;
  }
`;

const PathCell = styled.td`
  background: #fa8072;
`;

const IdCell = styled.div`
  display: flex;
  align-items: center;
  gap: 2px;
  height: 20px;
`;

const ListFooter = styled(Toolbar)`
  height: 26px;
  margin-top: 0;
`;

const StatusBar = styled.footer`
  display: flex;
  align-items: center;
  height: 31px;
  margin-top: 4px;
  padding-left: 6px;
  background: linear-gradient(#fcfcfc, #f2f2f2);
`;

const StatusLink = styled.a`
  display: flex;
  justify-content: center;
  width: 24px;
`;

const StatusText = styled.span`
  padding-left: 3px;
  font-family: "Open Sans", sans-serif;
`;

const IconText = styled.text`
  font-size: 7px;
  font-weight: 700;
  fill: ${INK};
`;
